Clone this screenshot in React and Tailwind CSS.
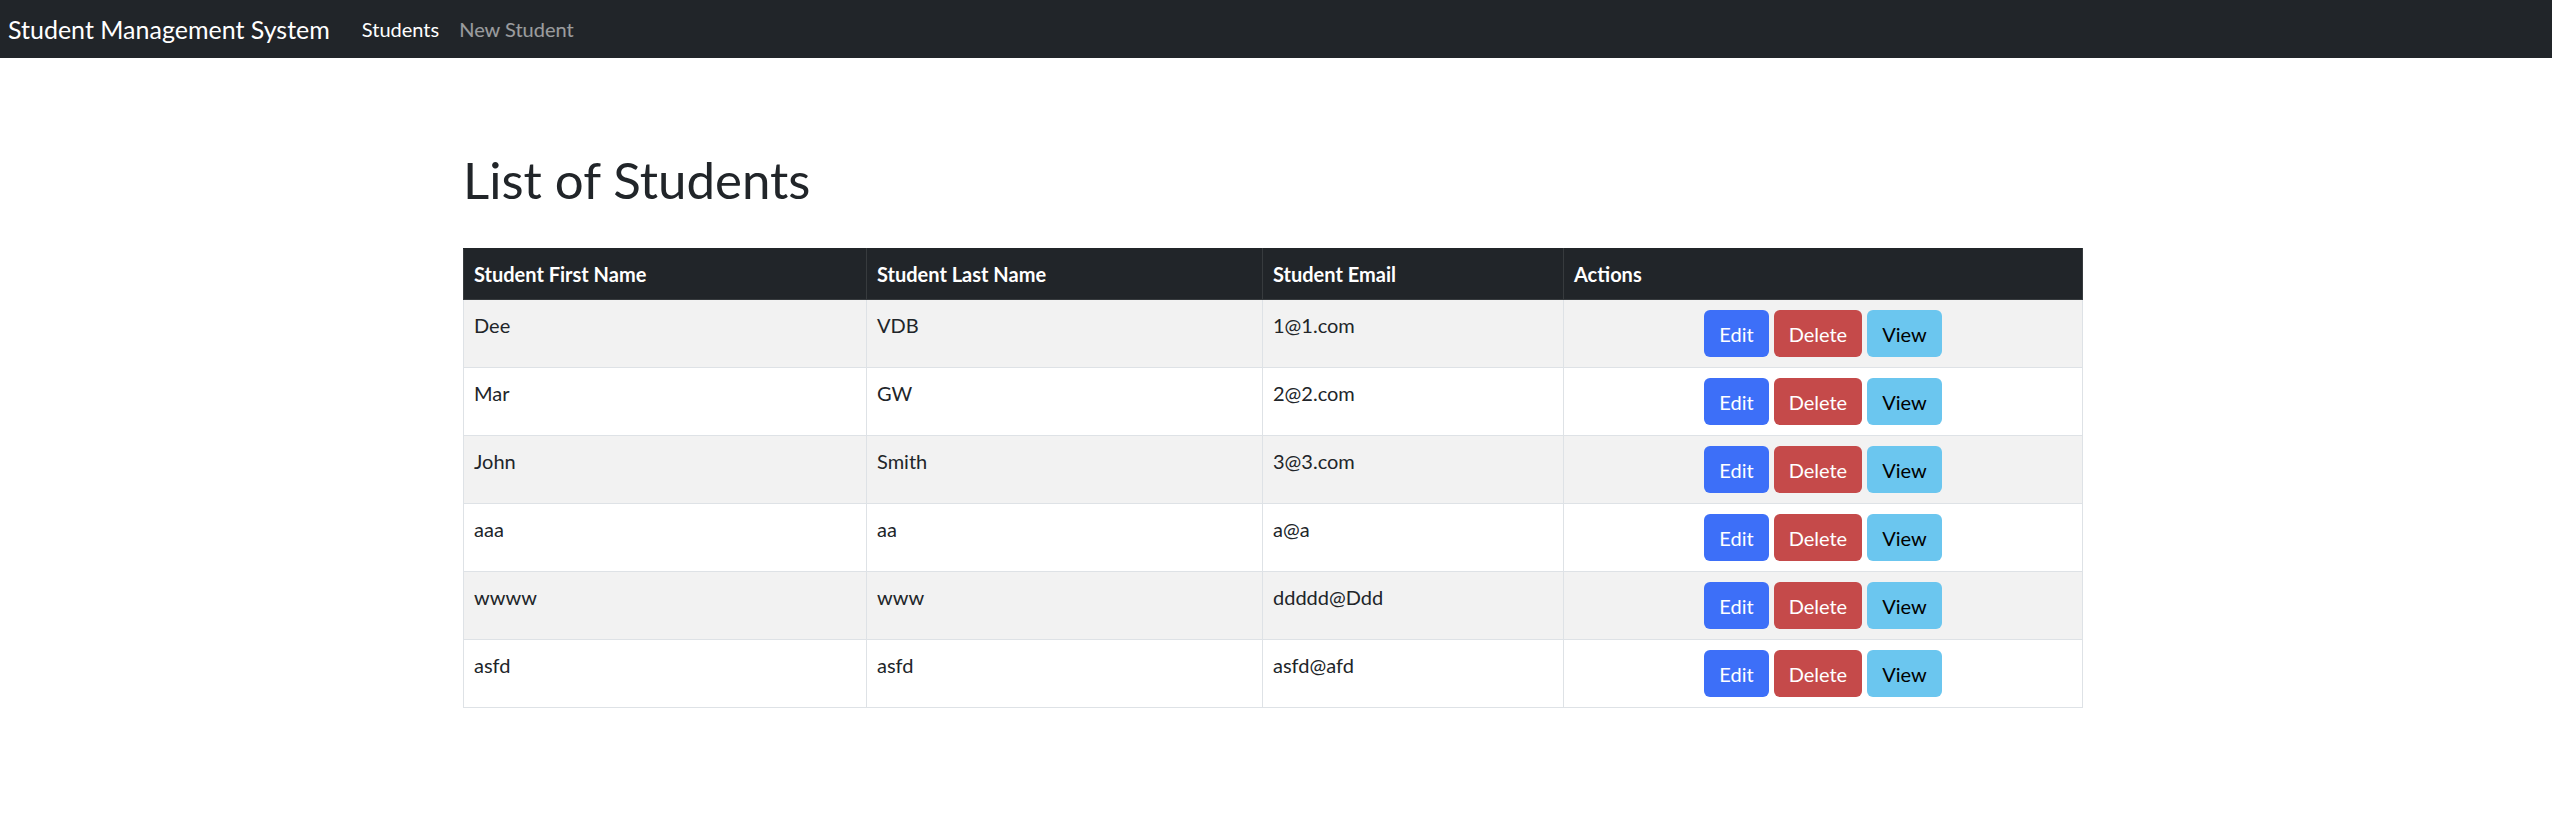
// App.jsx
import React from 'react';

const students = [
  { first: 'Dee', last: 'VDB', email: '1@1.com' },
  { first: 'Mar', last: 'GW', email: '2@2.com' },
  { first: 'John', last: 'Smith', email: '3@3.com' },
  { first: 'aaa', last: 'aa', email: 'a@a' },
  { first: 'wwww', last: 'www', email: 'ddddd@Ddd' },
  { first: 'asfd', last: 'asfd', email: 'asfd@afd' },
];

function Navbar() {
  return (
    <nav className="h-[58px] bg-[#212529] flex items-center px-2">
      <a className="text-[25px] leading-[37px] text-white mr-[22px]">Student Management System</a>
      <ul className="flex items-center text-[20px] leading-[30px]">
        <li><a className="px-[10px] text-white">Students</a></li>
        <li><a className="px-[10px] text-white/55">New Student</a></li>
      </ul>
    </nav>
  );
}

function StudentRow({ student, index }) {
  const striped = index % 2 === 0;
  return (
    <tr className={striped ? 'bg-[#f2f2f2]' : 'bg-white'}>
      <td className="border border-[#dee2e6] px-[10px] pt-[10px] pb-[27px] align-top">{student.first}</td>
      <td className="border border-[#dee2e6] px-[10px] pt-[10px] pb-[27px] align-top">{student.last}</td>
      <td className="border border-[#dee2e6] px-[10px] pt-[10px] pb-[27px] align-top">{student.email}</td>
      <td className="border border-[#dee2e6] p-[10px]">
        <div className="flex justify-center gap-[5px]">
          <button className="h-[47px] px-[15px] rounded-[6px] bg-[#3d6ff8] text-white">Edit</button>
          <button className="h-[47px] px-[15px] rounded-[6px] bg-[#c54a4a] text-white">Delete</button>
          <button className="h-[47px] px-[15px] rounded-[6px] bg-[#6bc6ef] text-black">View</button>
        </div>
      </td>
    </tr>
  );
}

export default function App() {
  return (
    <div className="min-h-screen bg-white text-[#212529] font-['Lato',sans-serif]">
      <Navbar />
      <main className="w-[1620px] ml-[463px] pt-[92px]">
        <h1 className="text-[51px] leading-[60px] font-normal mb-[38px]">List of Students</h1>
        <table className="w-full table-fixed border-collapse text-[20px] leading-[30px]">
          <colgroup>
            <col className="w-[403px]" />
            <col className="w-[396px]" />
            <col className="w-[301px]" />
            <col />
          </colgroup>
          <thead>
            <tr className="bg-[#212529] text-white">
              <th className="border border-[#373b3e] border-t-[#212529] px-[10px] py-[10px] text-left font-bold">Student First Name</th>
              <th className="border border-[#373b3e] border-t-[#212529] px-[10px] py-[10px] text-left font-bold">Student Last Name</th>
              <th className="border border-[#373b3e] border-t-[#212529] px-[10px] py-[10px] text-left font-bold">Student Email</th>
              <th className="border border-[#373b3e] border-t-[#212529] px-[10px] py-[10px] text-left font-bold">Actions</th>
            </tr>
          </thead>
          <tbody>
            {students.map((s, i) => (
              <StudentRow key={i} student={s} index={i} />
            ))}
          </tbody>
        </table>
      </main>
    </div>
  );
}
